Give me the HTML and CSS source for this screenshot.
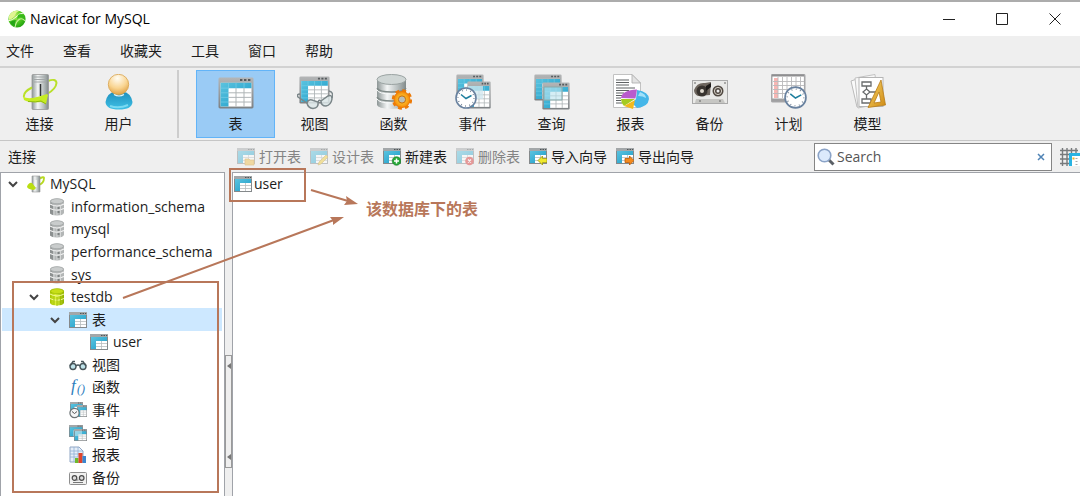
FILE: index.html
```html
<!DOCTYPE html>
<html lang="zh-CN">
<head>
  <meta charset="UTF-8" />
  <meta name="viewport" content="width=device-width, initial-scale=1" />
  <title>Navicat for MySQL</title>
  <link rel="stylesheet" href="styles.css">
</head>
<body>
  <!-- icon sprite -->
  <svg class="sprite" aria-hidden="true">
    <defs>
      <linearGradient id="g-cyan" x1="0" y1="0" x2="1" y2="1">
        <stop offset="0" stop-color="#5bc3df" /><stop offset="1" stop-color="#1c9cc8" />
      </linearGradient>
      <linearGradient id="g-grey" x1="0" y1="0" x2="0" y2="1">
        <stop offset="0" stop-color="#b4b6b7" /><stop offset="1" stop-color="#7d8184" />
      </linearGradient>
      <linearGradient id="g-metal" x1="0" y1="0" x2="1" y2="0">
        <stop offset="0" stop-color="#8d9696" /><stop offset=".35" stop-color="#f4f6f6" />
        <stop offset=".7" stop-color="#b9c0c0" /><stop offset="1" stop-color="#818a8a" />
      </linearGradient>
      <linearGradient id="g-user" x1="0" y1="0" x2="0" y2="1">
        <stop offset="0" stop-color="#1e8fbc" /><stop offset="1" stop-color="#3fc0e6" />
      </linearGradient>
      <radialGradient id="g-face" cx=".45" cy=".2" r=".8">
        <stop offset="0" stop-color="#fffdf5" /><stop offset=".6" stop-color="#f9d490" /><stop offset="1" stop-color="#dfa245" />
      </radialGradient>
      <radialGradient id="g-gear">
        <stop offset="0" stop-color="#ffe24a" /><stop offset="1" stop-color="#f68a06" />
      </radialGradient>
      <linearGradient id="g-lime" x1="0" y1="0" x2="1" y2="0">
        <stop offset="0" stop-color="#a5c400" /><stop offset=".4" stop-color="#dcf03a" /><stop offset="1" stop-color="#8fb000" />
      </linearGradient>
      <linearGradient id="g-gold" x1="0" y1="0" x2="1" y2="1">
        <stop offset="0" stop-color="#f7d568" /><stop offset="1" stop-color="#cf8a14" />
      </linearGradient>
      <radialGradient id="g-logo" cx=".35" cy=".3" r=".8">
        <stop offset="0" stop-color="#c8f06a" /><stop offset=".5" stop-color="#55cc22" /><stop offset="1" stop-color="#189a0c" />
      </radialGradient>
    </defs>

    <symbol id="i-logo" viewBox="0 0 18 18">
      <circle cx="9" cy="9" r="8.6" fill="url(#g-logo)" />
      <path d="M1 6Q4 0 11 1Q8 2 7 5Q5 9 1 10Z" fill="#dff592" />
      <path d="M0 11Q5 10 8 7Q11 3 16 3" fill="none" stroke="#f0fbe0" stroke-width="1" />
      <path d="M7 17Q8 11 12 9Q15 8 17 11" fill="none" stroke="#c6f09c" stroke-width="1.2" />
      <path d="M2 12Q5 10 8 10Q6 13 7 16Q3 15 2 12Z" fill="#23a516" />
      <path d="M10 5Q13 3 16 6L16 8Q12 6 9 9Z" fill="#36b91b" />
    </symbol>

    <symbol id="i-window" viewBox="0 0 36 33" preserveAspectRatio="none">
      <rect x=".5" y=".5" width="35" height="32" rx="1.5" fill="url(#g-grey)" />
      <path d="M22 3h2.4M26 3h2.4M30 3h2.4" stroke="#565b5e" stroke-width="2" />
      <rect x="2.5" y="6" width="31" height="24.5" fill="#fff" />
      <path d="M2.5 6h31v5.5h-23v19h-8z" fill="url(#g-cyan)" />
      <path d="M2.5 11.5h8M2.5 16.3h8M2.5 21h8M2.5 25.8h8M10.5 6v5.5M18 6v5.5M26 6v5.5" stroke="#73cbe4" stroke-width=".8" />
      <path d="M10.5 16.3h23M10.5 21h23M10.5 25.8h23M18 11.5v19M26 11.5v19" stroke="#aeb4b6" stroke-width="1" />
    </symbol>

    <symbol id="i-clock" viewBox="0 0 22 22">
      <circle cx="11" cy="11" r="10" fill="#fff" stroke="#68819f" stroke-width="1.6" />
      <circle cx="11" cy="11" r="8" fill="none" stroke="#6b7b8d" stroke-width="1.4" stroke-dasharray=".8 3.39" />
      <path d="M6 7.5L11 11.5L16.5 8.5" fill="none" stroke="#1e7f9e" stroke-width="1.5" />
    </symbol>

    <symbol id="i-link" viewBox="0 0 36 36">
      <path d="M26 7Q34 4 34.500 9Q34 15 25 20" fill="none" stroke="#b9e02a" stroke-width="2" />
      <rect x="10" y=".5" width="16.500" height="35" rx="1" fill="url(#g-metal)" stroke="#999" stroke-width=".8" />
      <path d="M12 3h12.500M12 5.500h12.500M12 8h12.500" stroke="#a3a7a8" stroke-width="1" />
      <path d="M18.500 10v12" stroke="#303436" stroke-width="1.500" />
      <path d="M10 13.500Q1 18 2 23" fill="none" stroke="#b9e02a" stroke-width="2" />
      <path d="M1 22.500Q6 26 17 22.500L25 20L26 21L24 30L19 28Q7 29 2 26Z" fill="#c6ec22" />
      <path d="M6 27.500Q14 28.500 19 27L24 30" fill="none" stroke="#8fbb0c" stroke-width="1" />
    </symbol>

    <symbol id="i-user" viewBox="0 0 36 36">
      <path d="M4.500 28Q6 19 14 17.500H22Q30 19 31.500 28Q31 35.500 18 35.500Q5 35.500 4.500 28Z" fill="url(#g-user)" />
      <path d="M9 32Q18 35 27 31" stroke="#79daf2" stroke-width="2" fill="none" />
      <circle cx="17.500" cy="10.500" r="10.200" fill="url(#g-face)" stroke="#d8a34e" stroke-width=".8" />
      <path d="M13 20.500Q18 23.500 23 20.500" stroke="#e8f7fa" stroke-width="1.200" fill="none" />
    </symbol>

    <symbol id="i-table" viewBox="0 0 36 36">
      <use href="#i-window" x="0" y="3" width="36" height="32" />
    </symbol>

    <symbol id="i-view" viewBox="0 0 36 36">
      <use href="#i-window" x="2" y="2" width="31" height="28" />
      <g fill="#dce6e8" fill-opacity=".85" stroke="#7b8689" stroke-width="1.500">
        <path d="M10 29Q11 25 15 26L21 28Q22 34 16 34.500Q11 34 10 29Z" />
        <path d="M24 27L31 22Q35 20 35 25Q34 31 29 32Q24 32 24 27Z" />
        <path d="M21 28Q22 25 24 27M10 29L1 23Q-1 20 3 20M35 24Q37 18 32 17" fill="none" />
      </g>
    </symbol>

    <symbol id="i-func" viewBox="0 0 36 36">
      <path d="M1 5V31Q2 34.500 15 35Q28 34.500 30 31V5Z" fill="url(#g-metal)" />
      <ellipse cx="15.500" cy="5.500" rx="14.500" ry="5" fill="#cfd6d5" stroke="#9aa3a2" />
      <path d="M1 14Q3 18 15.500 18Q28 18 30 14M1 23Q3 27 15.500 27Q28 27 30 23" fill="none" stroke="#7f8987" stroke-width="1.500" />
      <path d="M1 16Q3 20 15.500 20Q28 20 30 16M1 25Q3 29 15.500 29Q28 29 30 25" fill="none" stroke="#f7f9f9" />
      <circle cx="26" cy="25.500" r="8.700" fill="none" stroke="#ec7a08" stroke-width="3" stroke-dasharray="3.800 3.030" />
      <circle cx="26" cy="25.500" r="8" fill="url(#g-gear)" stroke="#ec7a08" />
      <circle cx="26" cy="25.500" r="3.600" fill="#b9bfb9" stroke="#c86d08" />
    </symbol>

    <symbol id="i-windows" viewBox="0 0 36 36">
      <use href="#i-window" x="0" y="0" width="28" height="27" />
      <use href="#i-window" x="8" y="8" width="28" height="28" />
      <path d="M10 13h18v13H10z" fill="#b9e2ee" fill-opacity=".6" stroke="#8aa" />
    </symbol>

    <symbol id="i-event" viewBox="0 0 36 36">
      <use href="#i-window" x="1" y="0" width="28" height="27" />
      <use href="#i-window" x="12" y="7" width="24" height="28" />
      <path d="M13 12h15v13H13z" fill="#cfe6ed" fill-opacity=".75" />
      <use href="#i-clock" x="0" y="13" width="22" height="22" />
    </symbol>

    <symbol id="i-report" viewBox="0 0 36 36">
      <path d="M.500.500H19L27.500 9V33.500H.500Z" fill="#fff" stroke="#c2c2c2" />
      <path d="M19 .500V9h8.500Z" fill="#e3e3e3" stroke="#aaa" stroke-width=".8" />
      <path d="M3 6h13M3 8.500h13M3 11h13M3 14h19M3 16.500h13M3 19h8M3 21.500h6M3 24h5M3 26.500h5M3 29h6" stroke="#5f6264" stroke-width="1.100" />
      <path d="M24 16Q36 18 36 25Q35 33 24 34L19 29L23 25Z" fill="#45b6e8" />
      <path d="M8 24Q9 16 24 15.500L22.500 24.500Z" fill="#b95bcd" />
      <path d="M8 25L22 25L11 32Q8 29 8 25Z" fill="#a5cb22" />
      <path d="M22 26L11 32L20 35Z" fill="#f2b91b" />
      <path d="M27 18Q33 20 33 24Q30 22 25 22Z" fill="#a1e1fa" />
    </symbol>

    <symbol id="i-backup" viewBox="0 0 36 36">
      <rect x=".500" y="6.500" width="35" height="23" fill="#e9e9e7" stroke="#aaa" />
      <path d="M2 16Q5 8 13 9L19 8L18 21L6 22Q2 20 2 16Z" fill="#6f675f" />
      <circle cx="10" cy="17" r="5.500" fill="#39342f" /><circle cx="10" cy="17" r="2" fill="#ded8ce" />
      <circle cx="26" cy="17" r="5.500" fill="#504841" /><circle cx="26" cy="17" r="3.600" fill="none" stroke="#d8d3c9" /><circle cx="26" cy="17" r="1.500" fill="#eee" />
      <path d="M14 12l5-3v4l-5 4z" fill="#1e1b18" />
      <path d="M4 25h27l2 4H3z" fill="#c6c6c3" />
      <circle cx="3" cy="9" r=".8" fill="#555" /><circle cx="33" cy="9" r=".8" fill="#555" /><circle cx="8" cy="27" r=".8" fill="#555" /><circle cx="28" cy="27" r=".8" fill="#555" />
    </symbol>

    <symbol id="i-plan" viewBox="0 0 36 36">
      <rect x=".700" y=".700" width="33" height="27" rx="1" fill="#fff" stroke="#a7a7a9" stroke-width="1.600" />
      <path d="M1 1.500h32" stroke="#8e8e90" stroke-width="2" />
      <path d="M1 26h32" stroke="#a0a0a2" stroke-width="3" />
      <path d="M3 4h4v20H3z" fill="#f8b6b3" />
      <path d="M7 3v21M11.500 3v21M16 3v21M20.500 3v21M25 3v21M29.500 3v21M2 7.500h31M2 11.500h31M2 15.500h31M2 19.500h31" stroke="#b9b9bb" stroke-width=".9" />
      <use href="#i-clock" x="13" y="12" width="23" height="23" />
    </symbol>

    <symbol id="i-model" viewBox="0 0 36 36">
      <path d="M1 7L10 4V33H7Z" fill="#fafafa" stroke="#bbb" />
      <path d="M5 4L25 .500L28 30L8 34Z" fill="#f7f7f7" stroke="#c2c2c2" />
      <rect x="9" y="3.500" width="24" height="29" fill="#fff" stroke="#b5b5b5" />
      <g fill="none" stroke="#686b6c" stroke-width="1.300">
        <path d="M12 8h9v4h-9zM16.500 12v3M16.500 15l3.500 3-3.500 3-3.500-3zM16.500 21v4M12 25h9v4h-9zM20 18h6" />
      </g>
      <path d="M31 6L35.500 31L18 33.500Z M29 18L24 29L31 28Z" fill="url(#g-gold)" fill-rule="evenodd" stroke="#b77b17" stroke-width=".8" />
    </symbol>

    <!-- small ones -->
    <symbol id="s-pane" viewBox="0 0 18 16" preserveAspectRatio="none">
      <rect width="18" height="16" fill="#85898b" />
      <path d="M0 0h18v3H0z" fill="#a3a7a9" />
      <path d="M11 1.500h1.500M13.500 1.500h1.500M16 1.500h1.200" stroke="#4f5456" stroke-width="1.200" />
      <path d="M1 3h16v4H6v8H1z" fill="url(#g-cyan)" />
      <path d="M6 7h11v8H6z" fill="#fff" />
      <path d="M6 9.500h11M6 12.500h11M11.500 7v8" stroke="#b7bcbe" stroke-width=".8" />
    </symbol>
    <symbol id="s-table" viewBox="0 0 18 18">
      <use href="#s-pane" y="1" width="18" height="16" />
    </symbol>
    <symbol id="s-db" viewBox="0 0 16 18">
      <path d="M1 3V15Q2 17.500 8 17.500Q14 17.500 15 15V3Q14 .500 8 .500Q2 .500 1 3Z" fill="#b3b6b6" />
      <path d="M1 4.500V15.500L4 17V6Z" fill="#8c9090" />
      <ellipse cx="8" cy="3.200" rx="6.500" ry="2.500" fill="#c9cccc" stroke="#999d9d" stroke-width=".6" />
      <path d="M1 6Q8 10 15 6M1 10.500Q8 14 15 10.500" fill="none" stroke="#f4f4f4" stroke-width="1.200" />
      <path d="M5 7v10M8 8v10M11.500 7v10" stroke="#dddfdf" stroke-width=".8" />
      <path d="M8.500 10h2M8.500 14h2" stroke="#6c7070" stroke-width="1.500" />
    </symbol>
    <symbol id="s-db-on" viewBox="0 0 16 18">
      <path d="M1 3V15Q2 17.500 8 17.500Q14 17.500 15 15V3Q14 .500 8 .500Q2 .500 1 3Z" fill="url(#g-lime)" />
      <ellipse cx="8" cy="3.200" rx="6.500" ry="2.500" fill="#c7df18" stroke="#96b500" stroke-width=".6" />
      <path d="M1 6Q8 10 15 6M1 10.500Q8 14 15 10.500" fill="none" stroke="#f2fa9a" stroke-width="1" />
      <path d="M5 8v9M8 9v9M11.500 8v9" stroke="#9cbb00" stroke-width=".8" />
    </symbol>
    <symbol id="s-conn" viewBox="0 0 18 18">
      <path d="M12 4Q17 1 17 3Q17 8 12 10" fill="none" stroke="#b6d91f" stroke-width="1.800" />
      <path d="M5 1h8v16H5z" fill="url(#g-metal)" stroke="#999" stroke-width=".6" />
      <path d="M9 5v7" stroke="#fff" />
      <path d="M0 11.500Q2 7 5 8L9 13L7 15Q0 14 0 11.500Z" fill="#bade12" />
    </symbol>
    <symbol id="s-glasses" viewBox="0 0 18 18">
      <g fill="#bfe3ea" stroke="#48565b" stroke-width="1.400">
        <circle cx="4" cy="10.500" r="3" /><circle cx="14" cy="10.500" r="3" />
        <path d="M7 10Q9 8 11 10M1 10L4 5.500H6M17 10L14 5.500H12" fill="none" />
      </g>
    </symbol>
    <symbol id="s-windows" viewBox="0 0 18 18">
      <use href="#s-pane" x="0" y="1" width="14" height="12" />
      <use href="#s-pane" x="5" y="5" width="13" height="12" />
      <path d="M6 7h7v5H6z" fill="#bfe4ee" fill-opacity=".6" />
    </symbol>
    <symbol id="s-event" viewBox="0 0 18 18">
      <use href="#s-pane" x="1" y="1" width="13" height="11" />
      <use href="#s-pane" x="8" y="4" width="10" height="12" />
      <circle cx="5.500" cy="12" r="4.600" fill="#f4f6f7" stroke="#6d7477" stroke-width="1.200" />
      <path d="M3 10.500l2.500 2L8 10.500" fill="none" stroke="#555" />
    </symbol>
    <symbol id="s-report" viewBox="0 0 18 18">
      <path d="M1 1h9l4 4v11H1z" fill="#e6eef8" stroke="#90a6c4" />
      <path d="M1 5h13M1 8h13M1 11h8M5 1v15M9 1v10" stroke="#8fb0d6" stroke-width=".8" />
      <path d="M6 12h3.500v5H6z" fill="#6fb92c" /><path d="M9.500 7h4v10h-4z" fill="#e0452d" /><path d="M13.500 10h3.500v7h-3.500z" fill="#3b86cf" />
    </symbol>
    <symbol id="s-backup" viewBox="0 0 18 18">
      <rect x=".500" y="3.500" width="17" height="12" rx="1" fill="#f1f1f0" stroke="#8e8e8e" />
      <circle cx="5.500" cy="9" r="2.300" fill="#ddd" stroke="#4a4a4a" stroke-width="1.200" /><circle cx="12.700" cy="9" r="2.300" fill="#ddd" stroke="#4a4a4a" stroke-width="1.200" />
      <path d="M7 11h2.500M4 13.500h10" stroke="#777" />
    </symbol>
    <symbol id="b-open" viewBox="0 0 18 18">
      <use href="#s-pane" width="18" height="16" /><path d="M8 11h4l1 1h4v5H8z" fill="#f0bd45" stroke="#cf9220" stroke-width=".7" />
    </symbol>
    <symbol id="b-edit" viewBox="0 0 18 18">
      <use href="#s-pane" width="18" height="16" /><path d="M8 17l1-3 7-7 2 2-7 7z" fill="#f3cc36" stroke="#b58e20" stroke-width=".6" />
    </symbol>
    <symbol id="b-add" viewBox="0 0 18 18">
      <use href="#s-pane" width="18" height="16" /><circle cx="13.500" cy="13" r="4.300" fill="#27a637" stroke="#138026" stroke-width=".6" /><path d="M13.500 10.500v5M11 13h5" stroke="#fff" stroke-width="1.500" />
    </symbol>
    <symbol id="b-del" viewBox="0 0 18 18">
      <use href="#s-pane" width="18" height="16" /><circle cx="13.500" cy="13" r="4.300" fill="#d93030" /><path d="M12 11.500l3 3M15 11.500l-3 3" stroke="#fff" stroke-width="1.300" />
    </symbol>
    <symbol id="b-import" viewBox="0 0 18 18">
      <use href="#s-pane" width="18" height="16" /><path d="M9 12.500l4.500-4.500v2.500H18v4h-4.500V17z" fill="#f0e92c" stroke="#9a9414" stroke-width=".8" />
    </symbol>
    <symbol id="b-export" viewBox="0 0 18 18">
      <use href="#s-pane" width="18" height="16" /><path d="M18 12.500L13.500 8v2.500H9v4h4.500V17z" fill="#f58a1c" stroke="#b75a08" stroke-width=".8" />
    </symbol>
  </svg>

  <div class="window">
    <header class="titlebar">
      <svg class="logo"><use href="#i-logo" /></svg>
      <h1>Navicat for MySQL</h1>
      <div class="win-buttons">
        <button type="button" aria-label="最小化"><svg viewBox="0 0 12 12"><path d="M0 6.500h12" /></svg></button>
        <button type="button" aria-label="最大化"><svg viewBox="0 0 12 12"><path d="M.500.500h11v11H.500z" /></svg></button>
        <button type="button" aria-label="关闭"><svg viewBox="0 0 12 12"><path d="M.500.500l11 11M11.500.500l-11 11" /></svg></button>
      </div>
    </header>

    <nav class="menubar">
      <button type="button">文件</button>
      <button type="button">查看</button>
      <button type="button">收藏夹</button>
      <button type="button">工具</button>
      <button type="button">窗口</button>
      <button type="button">帮助</button>
    </nav>

    <div class="toolbar">
      <button type="button" class="tool"><svg><use href="#i-link" /></svg>连接</button>
      <button type="button" class="tool"><svg><use href="#i-user" /></svg>用户</button>
      <span class="separator"></span>
      <button type="button" class="tool active"><svg><use href="#i-table" /></svg>表</button>
      <button type="button" class="tool"><svg><use href="#i-view" /></svg>视图</button>
      <button type="button" class="tool"><svg><use href="#i-func" /></svg>函数</button>
      <button type="button" class="tool"><svg><use href="#i-event" /></svg>事件</button>
      <button type="button" class="tool"><svg><use href="#i-windows" /></svg>查询</button>
      <button type="button" class="tool"><svg><use href="#i-report" /></svg>报表</button>
      <button type="button" class="tool"><svg><use href="#i-backup" /></svg>备份</button>
      <button type="button" class="tool"><svg><use href="#i-plan" /></svg>计划</button>
      <button type="button" class="tool"><svg><use href="#i-model" /></svg>模型</button>
    </div>

    <div class="subbar">
      <h2>连接</h2>
      <div class="actions">
        <button type="button" disabled><svg><use href="#b-open" /></svg>打开表</button>
        <button type="button" disabled><svg><use href="#b-edit" /></svg>设计表</button>
        <button type="button"><svg><use href="#b-add" /></svg>新建表</button>
        <button type="button" disabled><svg><use href="#b-del" /></svg>删除表</button>
        <button type="button"><svg><use href="#b-import" /></svg>导入向导</button>
        <button type="button"><svg><use href="#b-export" /></svg>导出向导</button>
      </div>
      <div class="search">
        <svg class="lens" viewBox="0 0 18 18">
          <path d="M11.500 11.500l5 5" stroke="#5b6066" stroke-width="3" />
          <circle cx="7.500" cy="7.500" r="6.300" fill="#dceafc" stroke="#8ba3c7" stroke-width="1.600" />
        </svg>
        <input type="text" placeholder="Search" aria-label="Search" />
        <button type="button" aria-label="清除"><svg viewBox="0 0 8 8"><path d="M1 1l6 6M7 1l-6 6" /></svg></button>
      </div>
      <button type="button" class="columns" aria-label="列">
        <svg viewBox="0 0 20 18">
          <path d="M0 2.500h18M0 6.500h9M0 11h9M0 15.500h9M2.500 0v18M7 0v18M11.500 0v5M16 0v5" stroke="#777a7c" stroke-width="1.400" />
          <path d="M9 5h11v3h-8v10H9z" fill="#29b3e2" />
          <path d="M12 8h8v10h-8z" fill="#fff" />
          <path d="M12.500 10.500h2" stroke="#f2b21d" stroke-width="2" />
          <path d="M15.500 10.500h2M15.500 13.500h2M15.500 16.500h2" stroke="#aaa" />
        </svg>
      </button>
    </div>

    <main class="workspace">
      <ul class="tree">
        <li><svg class="chevron" viewBox="0 0 16 16"><path d="M4 6l4 4 4-4" /></svg><svg class="icon"><use href="#s-conn" /></svg>MySQL</li>
        <li class="l1"><svg class="icon"><use href="#s-db" /></svg>information_schema</li>
        <li class="l1"><svg class="icon"><use href="#s-db" /></svg>mysql</li>
        <li class="l1"><svg class="icon"><use href="#s-db" /></svg>performance_schema</li>
        <li class="l1"><svg class="icon"><use href="#s-db" /></svg>sys</li>
        <li class="l1"><svg class="chevron" viewBox="0 0 16 16"><path d="M4 6l4 4 4-4" /></svg><svg class="icon"><use href="#s-db-on" /></svg>testdb</li>
        <li class="l2 selected"><svg class="chevron" viewBox="0 0 16 16"><path d="M4 6l4 4 4-4" /></svg><svg class="icon"><use href="#s-table" /></svg>表</li>
        <li class="l3"><svg class="icon"><use href="#s-table" /></svg>user</li>
        <li class="l2"><svg class="icon"><use href="#s-glasses" /></svg>视图</li>
        <li class="l2"><svg class="icon fx" viewBox="0 0 18 18"><text x="2" y="13">f</text><text class="fx-args" x="8" y="15">()</text></svg>函数</li>
        <li class="l2"><svg class="icon"><use href="#s-event" /></svg>事件</li>
        <li class="l2"><svg class="icon"><use href="#s-windows" /></svg>查询</li>
        <li class="l2"><svg class="icon"><use href="#s-report" /></svg>报表</li>
        <li class="l2"><svg class="icon"><use href="#s-backup" /></svg>备份</li>
      </ul>
      <div class="splitter"><div class="grip"><i></i><i></i></div></div>
      <section class="objects">
        <div class="object"><svg class="icon"><use href="#s-table" /></svg>user</div>
      </section>

      <!-- notes drawn over the panes -->
      <div class="note-box note-tree"></div>
      <div class="note-box note-object"></div>
      <svg class="note-lines" width="400" height="140">
        <path d="M123 126L334 48M311 18L348 29" />
        <path class="head" d="M344 45l-11 8l0-4l-3-4zM358 32l-14 1l3-4l-1-5z" />
      </svg>
      <p class="note-text">该数据库下的表</p>
    </main>
  </div>
</body>
</html>
```
FILE: styles.css
```css
:root {
  --chrome: #efefef;
  --line: #d2d2d2;
  --edge: #a0a3a9;
  --note: #b8775a;
}

* {
  box-sizing: border-box;
}

body {
  margin: 0;
  font-family: "Open Sans", "Noto Sans CJK SC", sans-serif;
  font-size: 14px;
  line-height: 20px;
  color: #1c1c1c;
  background: #fff;
}

button {
  font: inherit;
  color: inherit;
  padding: 0;
  border: 0;
  background: none;
  white-space: nowrap;
}

h1, h2, p, ul {
  margin: 0;
  padding: 0;
  font-size: 14px;
  font-weight: 400;
}

svg {
  display: block;
  flex: none;
}

.sprite {
  position: absolute;
  width: 0;
  height: 0;
}

.window {
  display: flex;
  flex-direction: column;
  min-height: 100vh;
  overflow: hidden;
  border-top: 2px solid #acacac;
}

/* title bar */
.titlebar {
  display: flex;
  align-items: center;
  height: 34px;
  padding-left: 8px;
  gap: 4px;
}

.titlebar h1 {
  color: #000;
}

.logo {
  width: 18px;
  height: 18px;
}

.win-buttons {
  display: flex;
  gap: 3px;
  margin-left: auto;
}

.win-buttons button {
  display: flex;
  align-items: center;
  justify-content: center;
  width: 50px;
  height: 32px;
}

.win-buttons svg {
  width: 12px;
  height: 12px;
  fill: none;
  stroke: #222;
}

/* menu */
.menubar {
  display: flex;
  align-items: center;
  gap: 29px;
  height: 32px;
  padding-left: 6px;
  background: var(--chrome);
  border-bottom: 2px solid var(--line);
}

/* main toolbar */
.toolbar {
  display: flex;
  height: 73px;
  padding: 2px 0;
  background: var(--chrome);
  border-bottom: 1px solid #c6c6c6;
}

.tool {
  display: flex;
  flex-direction: column;
  align-items: center;
  gap: 4px;
  width: 79px;
  height: 68px;
  padding-top: 3px;
  border: 1px solid transparent;
}

.tool svg {
  width: 36px;
  height: 36px;
}

.tool.active {
  background: #9acbf5;
  border-color: #62b4f8;
}

.separator {
  width: 2px;
  margin: 0 17px 0 19px;
  background: #cdcdcd;
}

/* object toolbar */
.subbar {
  display: flex;
  align-items: center;
  height: 31px;
  background: var(--chrome);
}

.subbar h2 {
  width: 237px;
  padding-left: 8px;
}

.actions {
  display: flex;
  gap: 9px;
}

.actions button {
  display: flex;
  align-items: center;
  gap: 4px;
}

.actions svg {
  width: 18px;
  height: 18px;
}

.actions button:disabled {
  color: #848484;
}

.actions button:disabled svg {
  opacity: 0.45;
}

.search {
  display: flex;
  align-items: center;
  width: 238px;
  height: 28px;
  margin-left: auto;
  padding: 0 6px 0 2px;
  background: #fff;
  border: 1px solid #858585;
}

.lens {
  width: 18px;
  height: 18px;
}

.search input {
  flex: 1;
  min-width: 0;
  padding: 0 0 0 2px;
  border: 0;
  outline: none;
  font: inherit;
  background: none;
}

.search input::placeholder {
  color: #555;
  opacity: 1;
}

.search button svg {
  width: 8px;
  height: 8px;
  fill: none;
  stroke: #4f83b5;
  stroke-width: 1.5;
}

.columns {
  margin-left: 8px;
}

.columns svg {
  width: 20px;
  height: 18px;
}

/* panes */
.workspace {
  position: relative;
  display: flex;
  flex: 1;
  background: var(--chrome);
}

.tree {
  display: grid;
  grid-template-rows: repeat(14, 1fr);
  align-self: stretch;
  width: 225px;
  padding: 0 2px 7px 1px;
  list-style: none;
  background: #fff;
  border: 1px solid var(--edge);
  border-bottom: 0;
}

.tree li {
  display: flex;
  align-items: center;
  padding-left: 25px;
}

.tree .l1 { padding-left: 46px; }
.tree .l2 { padding-left: 67px; }
.tree .l3 { padding-left: 88px; }

.tree .selected {
  background: #cde8ff;
}

.chevron {
  width: 16px;
  height: 16px;
  margin-left: -22px;
  margin-right: 6px;
  fill: none;
  stroke: #444;
  stroke-width: 2;
}

.icon {
  width: 18px;
  height: 18px;
  margin-right: 5px;
}

.fx {
  font-family: "Liberation Serif", serif;
  font-style: italic;
  font-size: 17px;
  fill: #2d7dbd;
}

.fx-args {
  font-size: 12px;
}

.splitter {
  display: flex;
  align-items: flex-start;
  width: 7px;
  padding-top: 183px;
}

.grip {
  display: flex;
  flex-direction: column;
  justify-content: space-between;
  align-items: center;
  width: 7px;
  height: 113px;
  padding: 7px 0;
  border: 1px solid #9a9a9a;
}

.grip i {
  border: 3px solid transparent;
  border-left: 0;
  border-right: 4px solid #777;
}

.objects {
  flex: 1;
  padding: 1px;
  background: #fff;
  border: 1px solid var(--edge);
  border-width: 1px 0 0 1px;
}

.object {
  display: flex;
  align-items: center;
}

.object .icon {
  margin-right: 2px;
}

/* annotations */
.note-box,
.note-lines,
.note-text {
  position: absolute;
  pointer-events: none;
}

.note-box {
  border: 2px solid var(--note);
}

.note-tree {
  left: 12px;
  top: 109px;
  width: 207px;
  height: 212px;
}

.note-object {
  left: 229px;
  top: -4px;
  width: 77px;
  height: 34px;
}

.note-lines {
  left: 0;
  top: 0;
  fill: none;
  stroke: var(--note);
  stroke-width: 2;
}

.note-lines .head {
  fill: var(--note);
  stroke: none;
}

.note-text {
  left: 366px;
  top: 27px;
  font-size: 16px;
  font-weight: 700;
  color: var(--note);
}
```
